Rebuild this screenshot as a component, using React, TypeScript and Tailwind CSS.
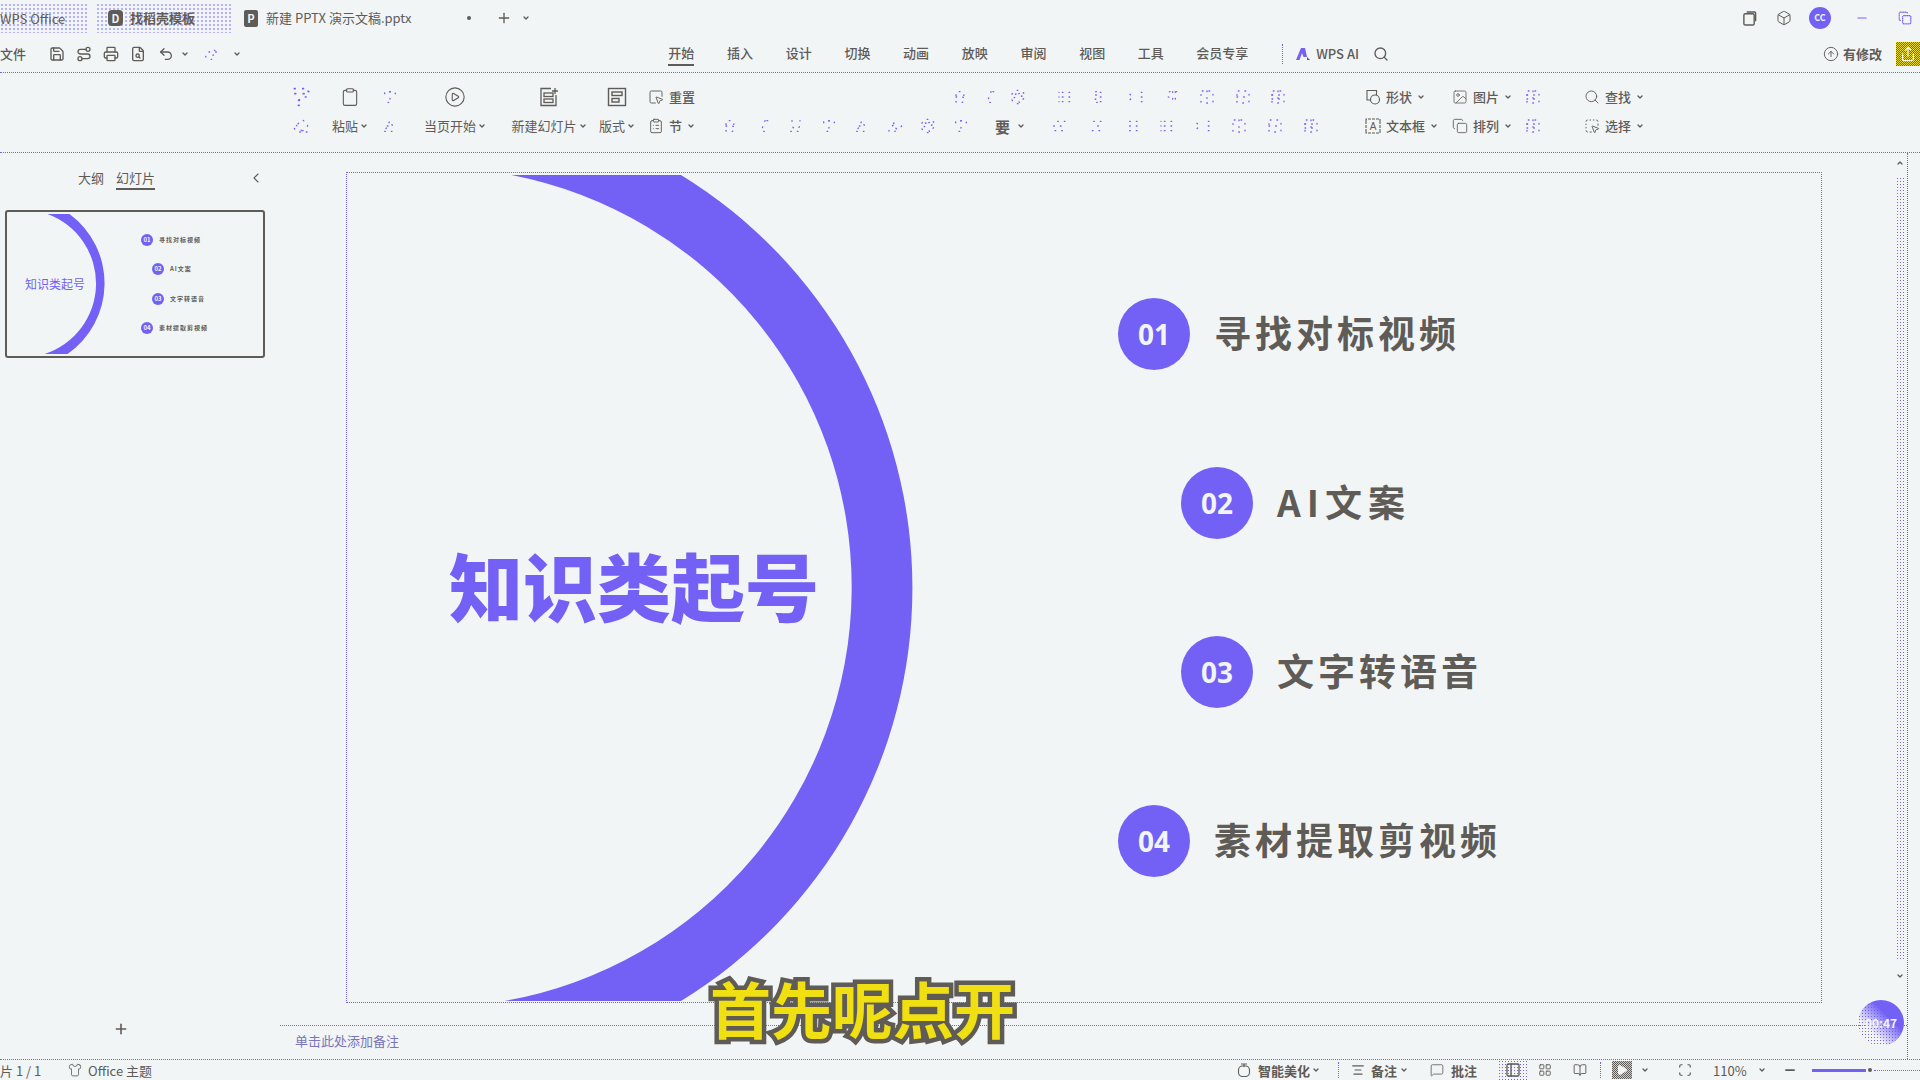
import type { ReactNode } from 'react';
import {
  BookOpen, Box, ChevronDown, ChevronLeft, CircleArrowUp, CirclePlay, Clipboard, ClipboardList, Copy, Eraser, FileSearch, Image,
  LayoutGrid, Minus, PaintRoller, PanelLeft, Play, Plus, Printer, Redo2, Route, Save, Scan, Search, Share, Shirt,
  AlignCenter, MessageSquare, SquareDashedMousePointer, SquareMousePointer, Undo2, Bold, Italic, Underline, AlignLeft,
  AlignRight, Indent, List, ListOrdered, Type, Palette, Highlighter, Baseline, Columns2, Rows2, Pilcrow, Table,
} from 'lucide-react';

const DOTTED = 'text-[#7261f4] [stroke-dasharray:1_9]';

function Chev({ className = '' }: { className?: string }) {
  return <ChevronDown className={`w-2 h-2 shrink-0 ${className}`} strokeWidth={4} />;
}

function Cell({ children, className = '' }: { children: ReactNode; className?: string }) {
  return <div className={`flex h-6 items-center justify-center ${className}`}>{children}</div>;
}

function BigTool({ width, icon, label }: { width: string; icon: ReactNode; label: string }) {
  return (
    <div className={`shrink-0 flex flex-col gap-[5px] ${width}`}>
      <Cell>{icon}</Cell>
      <Cell>
        <span>{label}</span>
        <Chev className="ml-0.5" />
      </Cell>
    </div>
  );
}

function SmallTool({ icon, label, chev = true }: { icon: ReactNode; label: string; chev?: boolean }) {
  return (
    <Cell className="!justify-start">
      <span className="w-4 h-4 mr-[5px] shrink-0 flex items-center justify-center">{icon}</span>
      <span className="font-medium">{label}</span>
      {chev && <Chev className="ml-[5px]" />}
    </Cell>
  );
}

function NewSlideIcon() {
  return (
    <svg viewBox="0 0 20 20" className="w-5 h-5" fill="none" stroke="currentColor" strokeWidth="1.3">
      <path d="M12 1.5H2v17h15V8" />
      <rect x="5" y="6" width="9" height="3.5" />
      <rect x="5" y="12" width="9" height="3.5" />
      <path d="M16 1v6M13 4h6" />
    </svg>
  );
}

function LayoutIcon() {
  return (
    <svg viewBox="0 0 20 20" className="w-5 h-5" fill="none" stroke="currentColor" strokeWidth="1.4">
      <rect x="1.5" y="1.5" width="17" height="17" />
      <rect x="5" y="5" width="10" height="3.5" />
      <rect x="5" y="11.5" width="7" height="3.5" />
    </svg>
  );
}

function ShapeIcon() {
  return (
    <svg viewBox="0 0 16 16" className="w-4 h-4" fill="none" stroke="currentColor" strokeWidth="1.1">
      <path d="M6 11H2V1.5h9.5V6" />
      <circle cx="10" cy="10.5" r="4.5" />
    </svg>
  );
}

function TextBoxIcon() {
  return (
    <svg viewBox="0 0 16 16" className="w-4 h-4" fill="none" stroke="currentColor" strokeWidth="1.1">
      <path d="M1 3V1h14v2M1 13v2h14v-2M1 3v10M15 3v10" strokeDasharray="3 1" />
      <text x="8" y="12" textAnchor="middle" fontSize="10" fill="currentColor" stroke="none" fontFamily="Liberation Sans">A</text>
    </svg>
  );
}

function WpsAiLogo() {
  return (
    <svg viewBox="0 0 16 14" className="w-4 h-3.5">
      <path d="M6 1h4l2 9H8.5L7 6 4.5 13H1z" fill="#7261f4" />
      <path d="M12 10l3 3h-3z" fill="#5f5b57" />
    </svg>
  );
}

function StackIcon() {
  return (
    <svg viewBox="0 0 16 16" className="w-[15px] h-[15px]" fill="none" stroke="currentColor" strokeWidth="1.5">
      <rect x="2" y="3" width="11" height="12" rx="1.5" />
      <path d="M5 1h8.5a1 1 0 0 1 1 1v9" />
    </svg>
  );
}

function BeautifyIcon() {
  return (
    <svg viewBox="0 0 14 14" className="w-3.5 h-3.5 shrink-0" fill="none" stroke="currentColor" strokeWidth="1.1">
      <rect x="1.5" y="3" width="11" height="10.5" rx="4" />
      <path d="M4 1h6M7 1v3" />
    </svg>
  );
}

function Arc() {
  return (
    <svg viewBox="0 0 1476 831" className="absolute inset-0 w-full h-full">
      <path d="M334 2A485.4 485.4 0 0 1 334 830L157 830A421 421 0 0 0 164 2Z" fill="#7261f4" />
    </svg>
  );
}

function ThumbArc() {
  return (
    <svg viewBox="0 0 255 144" className="absolute inset-0 w-full h-full">
      <path d="M62 2A86 86 0 0 1 60 142L37 142A74 74 0 0 0 40 2Z" fill="#7261f4" />
    </svg>
  );
}

const items = [
  { no: '01', label: '寻找对标视频', indent: 'ml-[771px]', track: 'tracking-[4px]' },
  { no: '02', label: 'AI文案', indent: 'ml-[834px]', track: 'tracking-[6px]' },
  { no: '03', label: '文字转语音', indent: 'ml-[834px]', track: 'tracking-[4px]' },
  { no: '04', label: '素材提取剪视频', indent: 'ml-[771px]', track: 'tracking-[4px]' },
];

const thumbItems = [
  { no: '01', label: '寻找对标视频', indent: 'ml-[134px]' },
  { no: '02', label: 'AI文案', indent: 'ml-[145px]' },
  { no: '03', label: '文字转语音', indent: 'ml-[145px]' },
  { no: '04', label: '素材提取剪视频', indent: 'ml-[134px]' },
];

export default function App() {
  return (
    <div className="relative w-[1920px] h-[1080px] overflow-hidden flex flex-col bg-[#f1f5f6] text-[#5f5b57] text-[13px] font-['Noto_Sans_CJK_SC','Noto_Sans',sans-serif]">
      {/* title bar */}
      <div className="h-9 shrink-0 flex items-center">
        <div className="w-[87px] h-[30px] flex items-center bg-[radial-gradient(#7261f4_0.6px,transparent_0.8px)] bg-[length:4px_4px] text-[13px] leading-none whitespace-nowrap">
          WPS Office
        </div>
        <div className="ml-[9px] w-[136px] h-[30px] flex items-center pl-[12px] bg-[radial-gradient(#7261f4_0.6px,transparent_0.8px)] bg-[length:4px_4px]">
          <span className="w-[15px] h-[16px] rounded-[4px] bg-[#5f5b57] text-[#f1f5f6] text-[11px] font-bold leading-[16px] text-center">D</span>
          <span className="ml-[7px] font-bold whitespace-nowrap">找稻壳模板</span>
        </div>
        <div className="ml-[12px] w-[14px] h-[17px] rounded-[2px] bg-[#5f5b57] text-[#f1f5f6] text-[11px] font-bold leading-[17px] text-center">P</div>
        <span className="ml-[8px] whitespace-nowrap">新建 PPTX 演示文稿.pptx</span>
        <span className="absolute left-[467px] top-[16px] w-1 h-1 rounded-full bg-[#5f5b57]" />
        <Plus className="absolute left-[496px] top-[10px] w-4 h-4" strokeWidth={2} />
        <Chev className="absolute left-[522px] top-[14px]" />
        <div className="ml-auto flex items-center">
          <StackIcon />
          <Box className="ml-[19px] w-[16px] h-[16px]" strokeWidth={1.5} />
          <span className="ml-[17px] w-[22px] h-[22px] rounded-full bg-[#7261f4] text-[#f1f5f6] text-[9px] font-bold leading-[22px] text-center">CC</span>
          <Minus className="ml-[24px] w-3.5 h-3.5 text-[#7261f4] [stroke-dasharray:2_1]" />
          <Copy className="ml-[29px] w-3.5 h-3.5 mr-[8px] text-[#7261f4] [stroke-dasharray:1_2]" />
        </div>
      </div>

      {/* menu row */}
      <div className="h-9 shrink-0 flex items-start border-b border-dotted border-[#7261f4] box-content">
        <div className="w-[652px] h-full shrink-0 flex items-center">
          <span className="w-[43px] font-medium">文件</span>
          <span className="w-[27px] flex justify-center"><Save className="w-4 h-4" /></span>
          <span className="w-[27px] flex justify-center"><Route className="w-4 h-4" /></span>
          <span className="w-[27px] flex justify-center"><Printer className="w-4 h-4" /></span>
          <span className="w-[27px] flex justify-center"><FileSearch className="w-4 h-4" /></span>
          <span className="w-[30px] flex justify-center"><Undo2 className="w-4 h-4" /></span>
          <Chev />
          <span className="ml-[8px] w-[27px] flex justify-center"><Redo2 className={`w-4 h-4 ${DOTTED}`} /></span>
          <Chev className="ml-[9px]" />
        </div>
        {['开始', '插入', '设计', '切换', '动画', '放映', '审阅', '视图', '工具'].map((tab, i) => (
          <div key={tab} className="w-[58.7px] shrink-0 pt-[8px] leading-[18px] text-center font-medium">
            <span className={`inline-block pb-[2px] ${i === 0 ? 'border-b-2 border-[#5f5b57]' : ''}`}>{tab}</span>
          </div>
        ))}
        <div className="w-[84px] shrink-0 pt-[8px] leading-[18px] text-center font-medium">会员专享</div>
        <div className="h-9 flex items-center">
          <span className="ml-[18px] h-5 border-l border-dotted border-[#7261f4]" />
          <span className="ml-[12px]"><WpsAiLogo /></span>
          <span className="ml-[5px] font-medium whitespace-nowrap">WPS AI</span>
          <Search className="ml-[14px] w-4 h-4" />
        </div>
        <div className="ml-auto h-9 flex items-center">
          <CircleArrowUp className="w-4 h-4" strokeWidth={1.4} />
          <span className="ml-[4px] font-bold">有修改</span>
          <span className="ml-[14px] w-6 h-6 flex items-center justify-center bg-[repeating-conic-gradient(#5f5b57_0_25%,#f0e012_0_50%)] bg-[length:2px_2px]">
            <Share className="w-4 h-4 text-[#f1f5f6]" />
          </span>
        </div>
      </div>

      {/* ribbon */}
      <div className="h-[67px] shrink-0 flex pl-[272px] pt-[12px] border-b border-dotted border-[#7261f4] box-content">
        <div className="w-[58px] shrink-0 flex flex-col gap-[5px]">
          <Cell><PaintRoller className={`w-5 h-5 ${DOTTED}`} /></Cell>
          <Cell><Eraser className={`w-5 h-4 ${DOTTED}`} /></Cell>
        </div>
        <BigTool width="w-[40px]" icon={<Clipboard className="w-5 h-5" strokeWidth={1.3} />} label="粘贴" />
        <div className="w-[40px] shrink-0 flex flex-col gap-[5px]">
          <Cell><Type className={`w-4 h-4 ${DOTTED}`} /></Cell>
          <Cell><Baseline className={`w-4 h-4 ${DOTTED}`} /></Cell>
        </div>
        <BigTool width="w-[90px]" icon={<CirclePlay className="w-[22px] h-[22px]" strokeWidth={1.2} />} label="当页开始" />
        <BigTool width="w-[98px]" icon={<NewSlideIcon />} label="新建幻灯片" />
        <BigTool width="w-[38px]" icon={<LayoutIcon />} label="版式" />
        <div className="ml-3 w-[52px] shrink-0 flex flex-col gap-[5px]">
          <SmallTool icon={<SquareMousePointer className="w-4 h-4" strokeWidth={1.4} />} label="重置" chev={false} />
          <SmallTool icon={<ClipboardList className="w-4 h-4" strokeWidth={1.4} />} label="节" />
        </div>
        <div className="w-[665px] shrink-0 flex flex-col gap-[5px]">
          <Cell className="!justify-start pl-[252px]">
            <div className="flex gap-[13px]">
              <Bold className={`w-4 h-4 ${DOTTED}`} />
              <Italic className={`w-4 h-4 ${DOTTED}`} />
              <Palette className={`w-4 h-4 ${DOTTED}`} />
            </div>
            <div className="ml-[31px] flex gap-[19.5px]">
              <List className={`w-4 h-4 ${DOTTED}`} />
              <ListOrdered className={`w-4 h-4 ${DOTTED}`} />
              <Indent className={`w-4 h-4 ${DOTTED}`} />
              <Pilcrow className={`w-4 h-4 ${DOTTED}`} />
              <Columns2 className={`w-4 h-4 ${DOTTED}`} />
              <Rows2 className={`w-4 h-4 ${DOTTED}`} />
              <Table className={`w-4 h-4 ${DOTTED}`} />
            </div>
          </Cell>
          <Cell className="!justify-start pl-[22px]">
            <div className="flex gap-[17px]">
              <Bold className={`w-4 h-4 ${DOTTED}`} />
              <Italic className={`w-4 h-4 ${DOTTED}`} />
              <Underline className={`w-4 h-4 ${DOTTED}`} />
              <Type className={`w-4 h-4 ${DOTTED}`} />
              <Baseline className={`w-4 h-4 ${DOTTED}`} />
              <Highlighter className={`w-4 h-4 ${DOTTED}`} />
              <Palette className={`w-4 h-4 ${DOTTED}`} />
              <Type className={`w-4 h-4 ${DOTTED}`} />
            </div>
            <span className="ml-[26px] w-[18px] text-[15px] leading-none font-bold">要</span>
            <Chev className="ml-1" />
            <div className="ml-[26px] flex gap-[20px]">
              <AlignLeft className={`w-4 h-4 ${DOTTED}`} />
              <AlignCenter className={`w-4 h-4 ${DOTTED}`} />
              <AlignRight className={`w-4 h-4 ${DOTTED}`} />
              <List className={`w-4 h-4 ${DOTTED}`} />
              <Indent className={`w-4 h-4 ${DOTTED}`} />
              <Columns2 className={`w-4 h-4 ${DOTTED}`} />
              <Rows2 className={`w-4 h-4 ${DOTTED}`} />
              <Table className={`w-4 h-4 ${DOTTED}`} />
            </div>
          </Cell>
        </div>
        <div className="w-[87px] shrink-0 flex flex-col gap-[5px]">
          <SmallTool icon={<ShapeIcon />} label="形状" />
          <SmallTool icon={<TextBoxIcon />} label="文本框" />
        </div>
        <div className="w-[73px] shrink-0 flex flex-col gap-[5px]">
          <SmallTool icon={<Image className="w-4 h-4" strokeWidth={1.2} />} label="图片" />
          <SmallTool icon={<Copy className="w-4 h-4" strokeWidth={1.3} />} label="排列" />
        </div>
        <div className="w-[59px] shrink-0 flex flex-col gap-[5px] items-start">
          <Cell className="w-4"><Table className={`w-4 h-4 ${DOTTED}`} /></Cell>
          <Cell className="w-4"><Table className={`w-4 h-4 ${DOTTED}`} /></Cell>
        </div>
        <div className="w-[80px] shrink-0 flex flex-col gap-[5px]">
          <SmallTool icon={<Search className="w-4 h-4" strokeWidth={1.4} />} label="查找" />
          <SmallTool icon={<SquareDashedMousePointer className="w-4 h-4" strokeWidth={1.4} />} label="选择" />
        </div>
      </div>

      {/* main */}
      <div className="flex-1 min-h-0 flex">
        <aside className="w-[280px] shrink-0 flex flex-col">
          <div className="h-[57px] shrink-0 flex items-start">
            <span className="ml-[78px] mt-[16px] leading-[18px]">大纲</span>
            <span className="ml-[12px] mt-[16px] leading-[18px] border-b-2 border-[#5f5b57] pb-[1px]">幻灯片</span>
            <ChevronLeft className="ml-[93px] mt-[17px] w-4 h-4" strokeWidth={1.6} />
          </div>
          <div className="relative ml-[5px] w-[260px] h-[148px] border-2 border-[#5f5b57] rounded-[3px]">
            <ThumbArc />
            <span className="absolute left-[18px] top-[63px] text-[12px] leading-[18px] text-[#7261f4] whitespace-nowrap">知识类起号</span>
            <div className="relative pt-[22px] flex flex-col gap-[17.3px]">
              {thumbItems.map((it) => (
                <div key={it.label} className={`flex items-center h-3 ${it.indent}`}>
                  <span className="w-3 h-3 rounded-full bg-[#7261f4] text-[#f1f5f6] text-[6px] font-bold leading-[12px] text-center">{it.no}</span>
                  <span className="ml-[6px] text-[6px] tracking-[1px] font-bold whitespace-nowrap leading-none">{it.label}</span>
                </div>
              ))}
            </div>
          </div>
          <div className="mt-auto mb-[22px] ml-[113px]">
            <Plus className="w-4 h-4" strokeWidth={2.4} />
          </div>
        </aside>

        <div className="flex-1 min-w-0 flex flex-col mr-[12px] border-r border-dotted border-[#7261f4]">
          <div className="flex-1 min-h-0 flex pt-[19px]">
            <div className="relative ml-[66px] w-[1476px] h-[831px] border border-dotted border-[#7261f4]">
              <Arc />
              <span className="absolute left-[102px] top-[361px] h-[100px] leading-[100px] text-[74px] font-black text-[#7261f4] whitespace-nowrap">
                知识类起号
              </span>
              <div className="relative pt-[125px] flex flex-col gap-[97px]">
                {items.map((it) => (
                  <div key={it.no} className={`flex items-center ${it.indent}`}>
                    <span className="w-[72px] h-[72px] shrink-0 rounded-full bg-[#7261f4] text-[#f1f5f6] text-[28px] font-bold text-center leading-[72px] font-['Noto_Sans',sans-serif]">
                      {it.no}
                    </span>
                    <span className={`ml-[24px] pb-[5px] text-[37px] leading-[48px] font-bold whitespace-nowrap ${it.track}`}>{it.label}</span>
                  </div>
                ))}
              </div>
            </div>
            <div className="ml-[74px] mt-[-13px] w-2 flex flex-col items-center">
              <ChevronDown className="w-2 h-2 rotate-180 shrink-0" strokeWidth={4} />
              <div className="mt-[10px] w-2 h-[783px] shrink-0 bg-[radial-gradient(#7261f4_0.8px,transparent_1px)] bg-[length:3px_3px]" />
              <Chev className="mt-[12px]" />
            </div>
          </div>
          <div className="h-[34px] shrink-0 border-t border-dotted border-[#7261f4] pl-[15px] pt-[6px] leading-[18px] text-[#7a74b8]">
            单击此处添加备注
          </div>
        </div>
      </div>

      {/* status bar */}
      <div className="h-[21px] shrink-0 flex items-center border-t border-dotted border-[#7261f4] leading-none whitespace-nowrap">
        <span className="w-[68px]">片 1 / 1</span>
        <Shirt className="w-3.5 h-3.5" strokeWidth={1.4} />
        <span className="ml-[6px]">Office 主题</span>
        <div className="ml-auto h-full flex items-center">
          <BeautifyIcon />
          <span className="ml-[7px] w-[52px] font-bold">智能美化</span>
          <Chev className="ml-[2px]" />
          <span className="ml-[18px] h-4 border-l border-dotted border-[#7261f4]" />
          <AlignCenter className="ml-[12px] w-3.5 h-3.5" />
          <span className="ml-[6px] w-[26px] font-bold">备注</span>
          <Chev className="ml-[3px]" />
          <MessageSquare className="ml-[22px] w-3.5 h-3.5" strokeWidth={1.4} />
          <span className="ml-[7px] w-[26px] font-bold">批注</span>
          <span className="ml-[21px] w-[30px] h-full flex items-center justify-center bg-[radial-gradient(#7261f4_0.6px,transparent_0.8px)] bg-[length:3px_3px]">
            <PanelLeft className="w-4 h-4" strokeWidth={2} />
          </span>
          <LayoutGrid className="ml-[10px] w-3.5 h-3.5" strokeWidth={1.6} />
          <BookOpen className="ml-[21px] w-3.5 h-3.5" strokeWidth={1.6} />
          <span className="ml-[13px] h-4 border-l border-dotted border-[#7261f4]" />
          <span className="ml-[11px] w-5 h-[18px] flex items-center justify-center bg-[repeating-conic-gradient(#5f5b57_0_25%,#f0e012_0_50%)] bg-[length:2px_2px]">
            <Play className="w-3 h-3 fill-[#f1f5f6] text-[#f1f5f6]" />
          </span>
          <Chev className="ml-[9px]" />
          <Scan className="ml-[29px] w-3.5 h-3.5" />
          <span className="ml-[21px] w-[34px]">110%</span>
          <Chev className="ml-[11px]" />
          <Minus className="ml-[17px] w-3.5 h-3.5" strokeWidth={3} />
          <span className="ml-[15px] w-[54px] h-[3px] bg-[#7261f4]" />
          <span className="ml-[2px] w-1 h-1 rounded-full bg-[#5f5b57]" />
          <span className="ml-[2px] w-[46px] border-t border-dotted border-[#7261f4]" />
        </div>
      </div>

      {/* overlays: video caption and timer */}
      <span className="absolute left-[710px] top-[964px] text-[61px] leading-[88px] font-bold text-[#f0e012] whitespace-nowrap [-webkit-text-stroke:9px_#5f5b57] [paint-order:stroke_fill]">
        首先呢点开
      </span>
      <div className="absolute left-[1858px] top-[1000px] w-[46px] h-[46px] rounded-full flex items-center justify-center bg-[linear-gradient(to_top_right,transparent_30%,#7261f4_65%),radial-gradient(#7261f4_0.7px,transparent_0.9px)] bg-[length:100%_100%,3px_3px] text-[#f1f5f6] text-[12px] font-bold">
        00:47
      </div>
    </div>
  );
}
